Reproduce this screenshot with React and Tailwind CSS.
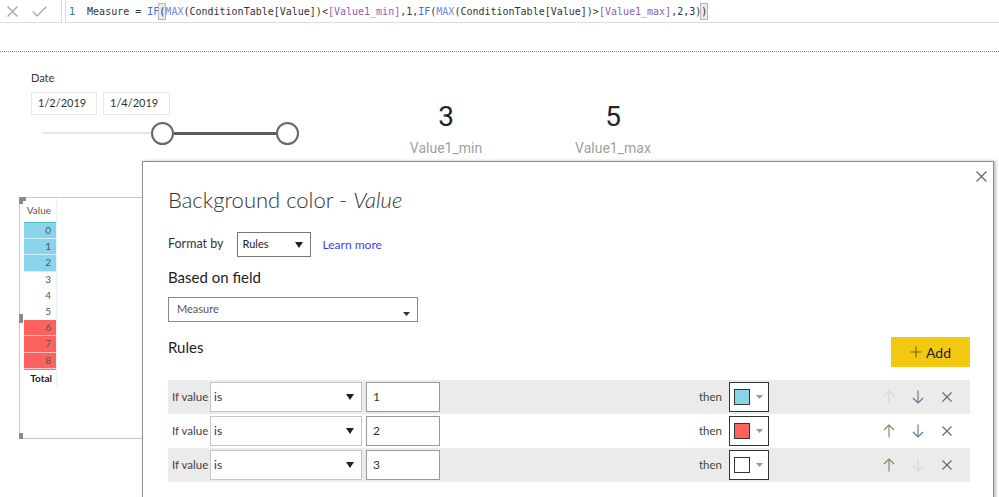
import React from "react";

const ui = { fontFamily: '"Segoe UI", Lato, "Liberation Sans", sans-serif' };
const mono = { fontFamily: '"DejaVu Sans Mono", "Liberation Mono", monospace' };

function Caret({ className = "" }) {
  return (
    <svg width="8" height="6" viewBox="0 0 8 6" className={className}>
      <path d="M0 0 H8 L4 6 Z" fill="#222" />
    </svg>
  );
}

function ArrowUp({ color }) {
  return (
    <svg width="12" height="14" viewBox="0 0 12 14" fill="none" stroke={color} strokeWidth="1.1">
      <path d="M6 1 V13.5" />
      <path d="M1 6 L6 1 L11 6" />
    </svg>
  );
}
function ArrowDown({ color }) {
  return (
    <svg width="12" height="14" viewBox="0 0 12 14" fill="none" stroke={color} strokeWidth="1.1">
      <path d="M6 0.5 V13" />
      <path d="M1 8 L6 13 L11 8" />
    </svg>
  );
}
function XIcon({ size = 10, color = "#666", w = 1.1 }) {
  return (
    <svg width={size} height={size} viewBox="0 0 10 10" fill="none" stroke={color} strokeWidth={w}>
      <path d="M0.5 0.5 L9.5 9.5 M9.5 0.5 L0.5 9.5" />
    </svg>
  );
}

function RuleRow({ n, swatch, bg, upOn, downOn }) {
  return (
    <div className={`flex h-[34px] w-[802px] items-center pr-[9px] ${bg}`}>
      <div className="w-[42px] pl-[4px] text-[11.5px] text-[#444] whitespace-nowrap">If value</div>
      <div className="flex h-[30px] w-[152px] items-center justify-between border border-[#c6c6c6] bg-white pl-[3px] pr-[7px]">
        <span className="text-[12px] text-[#333]">is</span>
        <Caret />
      </div>
      <div className="ml-[4px] flex h-[30px] w-[74px] items-center border border-[#999] bg-white pl-[6px] text-[12px] text-[#333]">
        {n}
      </div>
      <div className="flex-1" />
      <span className="text-[11.5px] text-[#444]">then</span>
      <div className="ml-[7px] flex h-[30px] w-[40px] items-center border border-[#333] bg-white pl-[4px]">
        <div className={`h-[16px] w-[16px] border border-[#333] ${swatch}`} />
        <svg width="7" height="4" viewBox="0 0 7 4" className="ml-[6px]">
          <path d="M0 0 H7 L3.5 4 Z" fill="#999" />
        </svg>
      </div>
      <div className="w-[105px]" />
      <div className="flex w-[87px] items-center">
        <div className="flex w-[29px] justify-center">
          <ArrowUp color={upOn ? "#8a7a5a" : "#d6d6d6"} />
        </div>
        <div className="flex w-[29px] justify-center">
          <ArrowDown color={downOn ? "#5a7390" : "#d6d6d6"} />
        </div>
        <div className="flex w-[29px] justify-center">
          <XIcon size={10} color="#666" />
        </div>
      </div>
    </div>
  );
}

const rows = [
  { v: 0, c: "bg-[#8ad4eb]" },
  { v: 1, c: "bg-[#8ad4eb]" },
  { v: 2, c: "bg-[#8ad4eb]" },
  { v: 3, c: "bg-white" },
  { v: 4, c: "bg-white" },
  { v: 5, c: "bg-white" },
  { v: 6, c: "bg-[#fd625e]" },
  { v: 7, c: "bg-[#fd625e]" },
  { v: 8, c: "bg-[#fd625e]" },
];

export default function App() {
  return (
    <div className="relative flex h-[497px] w-[999px] flex-col overflow-hidden bg-white" style={ui}>
      {/* formula bar */}
      <div className="flex h-[23px] w-full">
        <div className="flex h-full w-[62px] items-center border-b border-r border-[#dcdcdc]">
          <div className="ml-[7px]">
            <XIcon size={11} color="#a8a8a8" w={1.2} />
          </div>
          <svg width="15" height="11" viewBox="0 0 15 11" fill="none" stroke="#a8a8a8" strokeWidth="1.3" className="ml-[14px]">
            <path d="M0.7 5.5 L5 10 L14.3 0.7" />
          </svg>
        </div>
        <div className="ml-[3px] flex h-full flex-1 items-center border-b border-l border-[#dcdcdc] pl-[3px] text-[10px] text-[#333] whitespace-pre" style={mono}>
          <span className="text-[#237893]">1</span>
          <span>{"  Measure = "}</span>
          <span className="text-[#3d6ae0]">IF</span>
          <span className="bg-[#e8e8e8] outline outline-1 outline-[#b8b8b8]">(</span>
          <span className="text-[#6c8ae8]">MAX</span>
          <span>(ConditionTable[Value])&lt;</span>
          <span className="text-[#8e5bb5]">[Value1_min]</span>
          <span>,1,</span>
          <span className="text-[#3d6ae0]">IF</span>
          <span>(</span>
          <span className="text-[#6c8ae8]">MAX</span>
          <span>(ConditionTable[Value])&gt;</span>
          <span className="text-[#8e5bb5]">[Value1_max]</span>
          <span>,2,3)</span>
          <span className="bg-[#e8e8e8] outline outline-1 outline-[#b8b8b8]">)</span>
        </div>
      </div>
      <div className="h-[28px]" />
      <div className="w-full border-t border-dotted border-[#8a8a8a]" />

      {/* canvas */}
      <div className="relative flex-1">
        {/* date slicer */}
        <div className="absolute left-[31px] top-[18px]">
          <div className="h-[16px] text-[11px] leading-[16px] text-[#333]">Date</div>
          <div className="mt-[6px] flex gap-[6px]">
            <div className="flex h-[23px] w-[66px] items-center border border-[#e8e8e8] pl-[6px] text-[11px] text-[#333]">1/2/2019</div>
            <div className="flex h-[23px] w-[67px] items-center border border-[#e8e8e8] pl-[6px] text-[11px] text-[#333]">1/4/2019</div>
          </div>
          <div className="ml-[12px] mt-[7px] flex h-[22px] items-center">
            <div className="h-[2px] w-[108px] bg-[#e6e6e6]" />
            <div className="h-[23px] w-[23px] rounded-full border-2 border-[#666] bg-white" />
            <div className="h-[3px] w-[102px] bg-[#5c5c5c]" />
            <div className="h-[23px] w-[23px] rounded-full border-2 border-[#666] bg-white" />
          </div>
        </div>

        {/* cards */}
        <div className="absolute left-[385px] top-[49px] flex w-[122px] flex-col items-center">
          <div className="text-[28px] leading-[32px] text-[#252423]" style={{ fontFamily: "Roboto, sans-serif" }}>3</div>
          <div className="mt-[6px] text-[14px] leading-[18px] text-[#a0a0a0]" style={{ fontFamily: "Roboto, sans-serif" }}>Value1_min</div>
        </div>
        <div className="absolute left-[552px] top-[49px] flex w-[122px] flex-col items-center">
          <div className="text-[28px] leading-[32px] text-[#252423]" style={{ fontFamily: "Roboto, sans-serif" }}>5</div>
          <div className="mt-[6px] text-[14px] leading-[18px] text-[#a0a0a0]" style={{ fontFamily: "Roboto, sans-serif" }}>Value1_max</div>
        </div>

        {/* table visual */}
        <div className="absolute left-[19px] top-[145px] h-[242px] w-[124px] border border-[#c8c8c8]">
          <div className="absolute -left-[1px] -top-[1px] h-[4px] w-[7px] bg-[#8a8a8a]" />
          <div className="absolute -left-[1px] -top-[1px] h-[7px] w-[4px] bg-[#8a8a8a]" />
          <div className="absolute -left-[1px] top-[116px] h-[9px] w-[4px] bg-[#8a8a8a]" />
          <div className="absolute -bottom-[1px] -left-[1px] h-[6px] w-[4px] bg-[#8a8a8a]" />
          <div className="ml-[4px] flex w-[33px] flex-col border-r border-[#e6f6f6] text-[10px] text-[#555]">
            <div className="flex h-[24px] items-center justify-end pr-[5px]">Value</div>
            <div className="h-[1px] bg-[#4fc0c8]" />
            {rows.map((r) => (
              <div key={r.v} className={`flex h-[16.2px] items-center justify-end border-b border-white/60 pr-[5px] ${r.c}`}>
                {r.v}
              </div>
            ))}
            <div className="h-[1px] bg-[#4fc0c8]" />
            <div className="flex h-[17px] items-center justify-end pr-[4px] font-bold text-[#222]">Total</div>
          </div>
        </div>

        {/* dialog */}
        <div className="absolute left-[142px] top-[109px] h-[420px] w-[852px] border border-[#8e8e8e] bg-white pl-[25px] pr-[23px] shadow-[2px_0_3px_rgba(0,0,0,0.25)]">
          <div className="absolute right-[6px] top-[9px]">
            <XIcon size={11} color="#666" w={1.1} />
          </div>
          <div className="pt-[24px] text-[22px] font-light leading-[28px] text-[#333]">
            Background color - <span className="italic">Value</span>
          </div>
          <div className="mt-[18px] flex items-center">
            <span className="text-[12.5px] text-[#333]">Format by</span>
            <div className="ml-[13px] flex h-[25px] w-[74px] items-center justify-between border border-[#777] pl-[5px] pr-[7px]">
              <span className="text-[11px] text-[#222]">Rules</span>
              <Caret />
            </div>
            <span className="ml-[12px] text-[12px] text-[#3b3bff]">Learn more</span>
          </div>
          <div className="mt-[10px] text-[15px] leading-[20px] text-[#222]">Based on field</div>
          <div className="mt-[10px] flex h-[25px] w-[250px] items-center justify-between border border-[#888] pl-[8px] pr-[7px]">
            <span className="text-[11px] text-[#555]">Measure</span>
            <svg width="7" height="4" viewBox="0 0 7 4" className="mt-[8px]">
              <path d="M0 0 H7 L3.5 4 Z" fill="#333" />
            </svg>
          </div>
          <div className="mt-[15px] flex h-[30px] items-center justify-between">
            <span className="mb-[10px] text-[15px] text-[#222]">Rules</span>
            <div className="flex h-[30px] w-[79px] items-center justify-center bg-[#f2c811]">
              <svg width="12" height="12" viewBox="0 0 12 12" fill="none" stroke="#7a6400" strokeWidth="1.1">
                <path d="M6 0.5 V11.5 M0.5 6 H11.5" />
              </svg>
              <span className="ml-[4px] text-[14px] text-[#222]">Add</span>
            </div>
          </div>
          <div className="mt-[13px] flex flex-col">
            <RuleRow n="1" swatch="bg-[#8ad4eb]" bg="bg-[#ebebeb]" upOn={false} downOn={true} />
            <RuleRow n="2" swatch="bg-[#fd625e]" bg="bg-white" upOn={true} downOn={true} />
            <RuleRow n="3" swatch="bg-white" bg="bg-[#ebebeb]" upOn={true} downOn={false} />
          </div>
        </div>
      </div>
    </div>
  );
}
